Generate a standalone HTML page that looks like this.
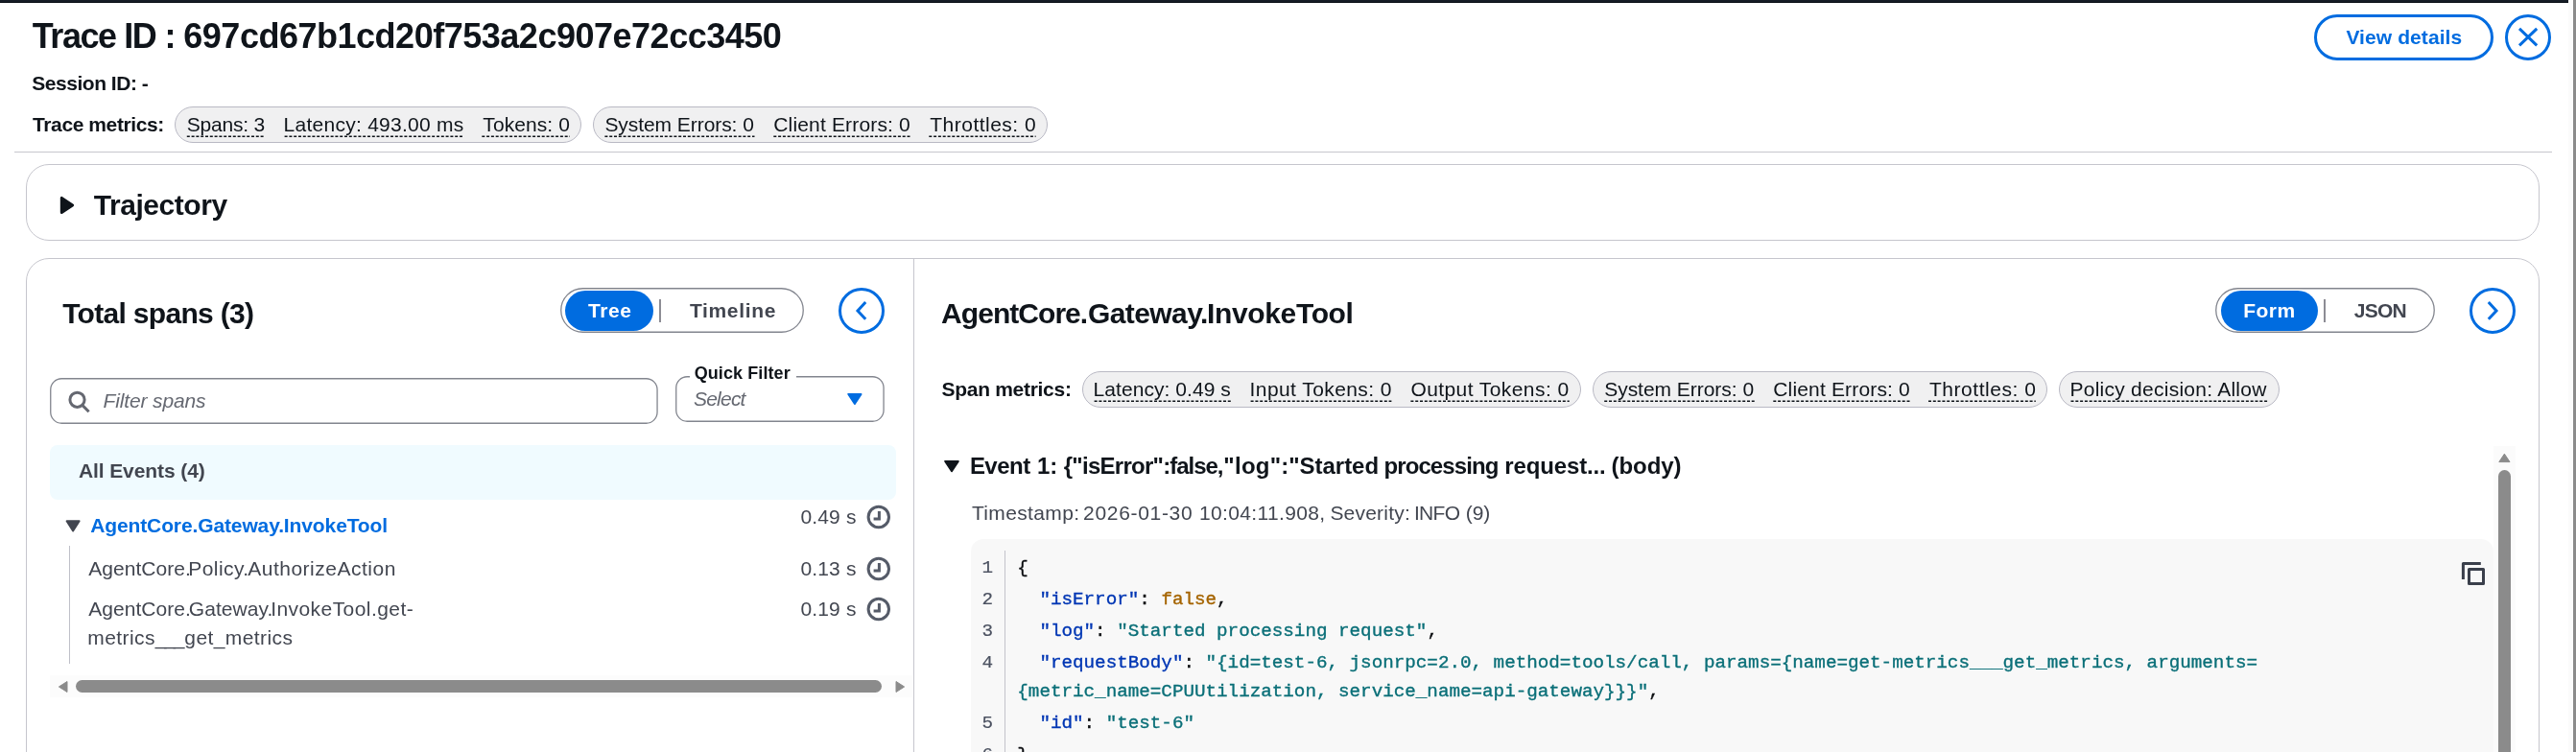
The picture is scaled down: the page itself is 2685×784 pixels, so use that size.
<!DOCTYPE html>
<html><head><meta charset="utf-8"><title>Trace</title>
<style>
*{box-sizing:border-box;margin:0;padding:0}
html,body{width:2685px;height:784px;overflow:hidden;background:#fff}
body{position:relative;font-family:"Liberation Sans",sans-serif;color:#0f141a}
.a{position:absolute}
.t{position:absolute;white-space:pre;font-family:"Liberation Sans",sans-serif}
.pill{position:absolute;height:38px;border:1px solid #b9b9c4;border-radius:19px;background:#f0f0f1}
.box{position:absolute;border:1px solid #c6c6cd;border-radius:24px;background:#fff}
.segon{position:absolute;height:42px;border-radius:21px;background:#006ce0}
.circ{position:absolute;width:48px;height:48px;border:3px solid #006ce0;border-radius:50%;background:#fff}
.ln{-webkit-text-stroke:0.2px;position:absolute;left:1012px;width:23px;text-align:right;font-family:"Liberation Mono",monospace;font-size:19.25px;line-height:30px;color:#4b5160;white-space:pre}
.cl{-webkit-text-stroke:0.35px;position:absolute;left:1060.3px;font-family:"Liberation Mono",monospace;font-size:19.25px;line-height:30px;white-space:pre}
#w{position:absolute;left:0;top:0;width:2685px;height:784px;overflow:hidden;will-change:transform}
</style></head><body><div id="w">
<!-- chrome -->
<div class="a" style="left:0;top:0;width:2677px;height:3px;background:#161d26"></div><div class="a" style="left:0;top:2px;width:2677px;height:1px;background:#060b12"></div>
<div class="a" style="left:2677px;top:0;width:8px;height:784px;background:#fbfbfb"></div>
<div class="a" style="left:2682px;top:0;width:3px;height:784px;background:#8b8b8b"></div>

<!-- header -->
<div class="a" style="left:15px;top:157.5px;width:2645px;height:1.5px;background:#c6c6cd"></div>
<div class="pill" style="left:182px;top:111px;width:424px"></div>
<div class="pill" style="left:618px;top:111px;width:474px"></div>
<div class="a" style="left:2412px;top:15px;width:187px;height:48px;border:3px solid #006ce0;border-radius:24px"></div>
<div class="circ" style="left:2611px;top:15px"></div>
<svg class="a" style="left:2611px;top:15px" width="48" height="48" viewBox="0 0 48 48"><path d="M15 14.9 L33.2 32.3 M33.2 14.9 L15 32.3" stroke="#006ce0" stroke-width="3" fill="none"/></svg>

<!-- trajectory -->
<div class="box" style="left:27px;top:171px;width:2620px;height:80px"></div>
<svg class="a" style="left:60px;top:200px" width="24" height="28" viewBox="0 0 24 28"><path d="M4.3 6.4 L4.3 21.4 L15.6 13.9 Z" fill="#0f141a" stroke="#0f141a" stroke-width="3" stroke-linejoin="round"/></svg>

<!-- main box -->
<div class="box" style="left:27px;top:269px;width:2620px;height:560px"></div>
<div class="a" style="left:952px;top:270px;width:1px;height:520px;background:#c6c6cd"></div>

<!-- left panel header -->
<svg class="a" style="left:580px;top:296px" width="262" height="56"><rect x="4.75" y="4.75" width="252.5" height="45.5" rx="22.75" fill="#fff" stroke="#82858e" stroke-width="1.3"/></svg>
<div class="segon" style="left:589px;top:303px;width:92px"></div>
<div class="a" style="left:687px;top:312px;width:2px;height:24px;background:#8c8c94"></div>
<div class="circ" style="left:874px;top:300px"></div>
<svg class="a" style="left:874px;top:300px" width="48" height="48" viewBox="0 0 48 48"><path d="M28.2 15.1 L20 23.9 L28.2 32.7" stroke="#006ce0" stroke-width="3" fill="none"/></svg>

<!-- filter input -->
<svg class="a" style="left:48px;top:390px" width="642" height="56"><rect x="4.75" y="4.75" width="632.3" height="46.5" rx="11.5" fill="#fff" stroke="#82858e" stroke-width="1.3"/></svg>
<svg class="a" style="left:68px;top:404px" width="30" height="30" viewBox="0 0 30 30"><circle cx="12.5" cy="12.8" r="7.6" stroke="#656871" stroke-width="3" fill="none"/><path d="M18 18.6 L24.6 25.2" stroke="#656871" stroke-width="3" fill="none"/></svg>
<!-- quick filter -->
<svg class="a" style="left:700px;top:388px" width="226" height="56"><rect x="4.75" y="4.75" width="216.3" height="46.5" rx="11.5" fill="#fff" stroke="#82858e" stroke-width="1.3"/></svg>
<div class="a" style="left:718.5px;top:378px;width:111.5px;height:24px;background:#fff"></div>
<svg class="a" style="left:880px;top:406px" width="22" height="20" viewBox="0 0 22 20"><path d="M4.3 4.9 L17.5 4.9 L10.9 15 Z" fill="#006ce0" stroke="#006ce0" stroke-width="2" stroke-linejoin="round"/></svg>

<!-- all events -->
<div class="a" style="left:52px;top:464px;width:882px;height:57px;border-radius:8px;background:#f0fbff"></div>
<svg class="a" style="left:66px;top:538px" width="20" height="20" viewBox="0 0 20 20"><path d="M3.6 5.3 L16.6 5.3 L10.1 15.4 Z" fill="#424650" stroke="#424650" stroke-width="2" stroke-linejoin="round"/></svg>
<div class="a" style="left:72px;top:569px;width:1px;height:123px;background:#bfc0c8"></div>
<!-- clocks -->
<svg class="a" style="left:902px;top:525px" width="28" height="28" viewBox="0 0 28 28"><circle cx="13.8" cy="14" r="10.7" stroke="#555b68" stroke-width="3" fill="none"/><path d="M14.4 8 L14.4 16 L8.6 16" stroke="#555b68" stroke-width="3" fill="none"/></svg>
<svg class="a" style="left:902px;top:579px" width="28" height="28" viewBox="0 0 28 28"><circle cx="13.8" cy="14" r="10.7" stroke="#555b68" stroke-width="3" fill="none"/><path d="M14.4 8 L14.4 16 L8.6 16" stroke="#555b68" stroke-width="3" fill="none"/></svg>
<svg class="a" style="left:902px;top:620.8px" width="28" height="28" viewBox="0 0 28 28"><circle cx="13.8" cy="14" r="10.7" stroke="#555b68" stroke-width="3" fill="none"/><path d="M14.4 8 L14.4 16 L8.6 16" stroke="#555b68" stroke-width="3" fill="none"/></svg>
<!-- h scrollbar -->
<div class="a" style="left:52px;top:704px;width:899px;height:23px;background:#fcfcfc"></div>
<div class="a" style="left:79px;top:709px;width:840px;height:13px;border-radius:6.5px;background:#8b8b8b"></div>
<svg class="a" style="left:58px;top:706px" width="16" height="20" viewBox="0 0 16 20"><path d="M12 4.5 L3.4 10 L12 15.5 Z" fill="#8b8b8b" stroke="#8b8b8b" stroke-width="1" stroke-linejoin="round"/></svg>
<svg class="a" style="left:930px;top:706px" width="16" height="20" viewBox="0 0 16 20"><path d="M4 4.5 L12.6 10 L4 15.5 Z" fill="#8b8b8b" stroke="#8b8b8b" stroke-width="1" stroke-linejoin="round"/></svg>

<!-- right panel header -->
<svg class="a" style="left:2305px;top:296px" width="237" height="56"><rect x="4.75" y="4.75" width="227.5" height="45.5" rx="22.75" fill="#fff" stroke="#82858e" stroke-width="1.3"/></svg>
<div class="segon" style="left:2315px;top:303px;width:101px"></div>
<div class="a" style="left:2422px;top:312px;width:2px;height:24px;background:#8c8c94"></div>
<div class="circ" style="left:2574px;top:300px"></div>
<svg class="a" style="left:2574px;top:300px" width="48" height="48" viewBox="0 0 48 48"><path d="M19.8 15.1 L28 23.9 L19.8 32.7" stroke="#006ce0" stroke-width="3" fill="none"/></svg>
<!-- span pills -->
<div class="pill" style="left:1128px;top:387px;width:520px"></div>
<div class="pill" style="left:1660px;top:387px;width:474px"></div>
<div class="pill" style="left:2146px;top:387px;width:230px"></div>
<!-- event -->
<svg class="a" style="left:982px;top:476px" width="20" height="20" viewBox="0 0 20 20"><path d="M3.2 4.9 L16.8 4.9 L10 15.1 Z" fill="#0f141a" stroke="#0f141a" stroke-width="2" stroke-linejoin="round"/></svg>
<!-- code block -->
<div class="a" style="left:1012px;top:562px;width:1587px;height:240px;border-radius:13px 13px 0 0;background:#f8f8f8"></div>
<div class="a" style="left:1047px;top:574px;width:1px;height:220px;background:#c3c3cb"></div>
<svg class="a" style="left:2562px;top:582px" width="32" height="32" viewBox="0 0 32 32"><path d="M5.4 21.9 L5.4 5.4 L23.8 5.4" stroke="#3a3f4b" stroke-width="3" stroke-linejoin="round" fill="none"/><rect x="11.5" y="11.5" width="15" height="14.9" stroke="#3a3f4b" stroke-width="3" stroke-linejoin="round" fill="none"/></svg>
<!-- v scrollbar -->
<div class="a" style="left:2599px;top:465px;width:23px;height:330px;background:#fbfbfb"></div>
<div class="a" style="left:2604px;top:490px;width:13px;height:320px;border-radius:6.5px;background:#8b8b8b"></div>
<svg class="a" style="left:2600px;top:468px" width="20" height="18" viewBox="0 0 20 18"><path d="M4.8 13.6 L10.4 5.2 L16 13.6 Z" fill="#8b8b8b" stroke="#8b8b8b" stroke-width="1" stroke-linejoin="round"/></svg>

<div class="t" style="left:33.8px;top:20px;font-size:36px;line-height:36px;letter-spacing:-1.443px;color:#0f141a;font-weight:700;">Trace ID</div>
<div class="t" style="left:171.5px;top:20px;font-size:36px;line-height:36px;letter-spacing:0.000px;color:#0f141a;font-weight:700;">:</div>
<div class="t" style="left:191.3px;top:20px;font-size:36px;line-height:36px;letter-spacing:-0.484px;color:#0f141a;font-weight:700;">697cd67b1cd20f753a2c907e72cc3450</div>
<div class="t" style="left:33.3px;top:76px;font-size:21px;line-height:21px;letter-spacing:-0.475px;color:#0f141a;font-weight:700;">Session ID: -</div>
<div class="t" style="left:34.1px;top:119px;font-size:21px;line-height:21px;letter-spacing:-0.408px;color:#0f141a;font-weight:700;">Trace metrics:</div>
<div class="t" style="left:194.8px;top:119px;font-size:21px;line-height:21px;letter-spacing:-0.200px;color:#0f141a;">Spans: 3</div>
<svg class="a" style="left:194px;top:140px" width="84" height="5"><line x1="0.8" y1="2.25" x2="82.4" y2="2.25" stroke="#0f141a" stroke-width="1.7" stroke-dasharray="3 1.8"/></svg>
<div class="t" style="left:295.6px;top:119px;font-size:21px;line-height:21px;letter-spacing:0.259px;color:#0f141a;">Latency: 493.00 ms</div>
<svg class="a" style="left:296px;top:140px" width="188" height="5"><line x1="0.6" y1="2.25" x2="187.0" y2="2.25" stroke="#0f141a" stroke-width="1.7" stroke-dasharray="3 1.8"/></svg>
<div class="t" style="left:503.3px;top:119px;font-size:21px;line-height:21px;letter-spacing:0.087px;color:#0f141a;">Tokens: 0</div>
<svg class="a" style="left:502px;top:140px" width="93" height="5"><line x1="0.3" y1="2.25" x2="92.0" y2="2.25" stroke="#0f141a" stroke-width="1.7" stroke-dasharray="3 1.8"/></svg>
<div class="t" style="left:630.4px;top:119px;font-size:21px;line-height:21px;letter-spacing:-0.060px;color:#0f141a;">System Errors: 0</div>
<svg class="a" style="left:630px;top:140px" width="158" height="5"><line x1="0.4" y1="2.25" x2="156.5" y2="2.25" stroke="#0f141a" stroke-width="1.7" stroke-dasharray="3 1.8"/></svg>
<div class="t" style="left:806.3px;top:119px;font-size:21px;line-height:21px;letter-spacing:0.160px;color:#0f141a;">Client Errors: 0</div>
<svg class="a" style="left:806px;top:140px" width="144" height="5"><line x1="0.3" y1="2.25" x2="142.7" y2="2.25" stroke="#0f141a" stroke-width="1.7" stroke-dasharray="3 1.8"/></svg>
<div class="t" style="left:969.3px;top:119px;font-size:21px;line-height:21px;letter-spacing:0.482px;color:#0f141a;">Throttles: 0</div>
<svg class="a" style="left:968px;top:140px" width="113" height="5"><line x1="0.3" y1="2.25" x2="111.6" y2="2.25" stroke="#0f141a" stroke-width="1.7" stroke-dasharray="3 1.8"/></svg>
<div class="t" style="left:2445.4px;top:28px;font-size:21px;line-height:21px;letter-spacing:0.091px;color:#006ce0;font-weight:700;">View details</div>
<div class="t" style="left:97.7px;top:199px;font-size:30px;line-height:30px;letter-spacing:-0.444px;color:#0f141a;font-weight:700;">Trajectory</div>
<div class="t" style="left:65.2px;top:312px;font-size:30px;line-height:30px;letter-spacing:-0.693px;color:#0f141a;font-weight:700;">Total spans (3)</div>
<div class="t" style="left:612.9px;top:313px;font-size:21px;line-height:21px;letter-spacing:0.633px;color:#ffffff;font-weight:700;">Tree</div>
<div class="t" style="left:718.9px;top:313px;font-size:21px;line-height:21px;letter-spacing:0.671px;color:#424650;font-weight:700;">Timeline</div>
<div class="t" style="left:107.5px;top:407px;font-size:21px;line-height:21px;letter-spacing:-0.136px;color:#656871;font-style:italic;">Filter spans</div>
<div class="t" style="left:723.7px;top:380px;font-size:18px;line-height:18px;letter-spacing:0.091px;color:#0f141a;font-weight:700;">Quick Filter</div>
<div class="t" style="left:722.9px;top:405px;font-size:21px;line-height:21px;letter-spacing:-0.760px;color:#656871;font-style:italic;">Select</div>
<div class="t" style="left:81.9px;top:480px;font-size:21px;line-height:21px;letter-spacing:-0.092px;color:#424650;font-weight:700;">All Events (4)</div>
<div class="t" style="left:94.2px;top:537px;font-size:21px;line-height:21px;letter-spacing:-0.119px;color:#006ce0;font-weight:700;">AgentCore.Gateway.InvokeTool</div>
<div class="t" style="left:92.2px;top:582px;font-size:21px;line-height:21px;letter-spacing:0.044px;color:#424650;">AgentCore.</div>
<div class="t" style="left:196.3px;top:582px;font-size:21px;line-height:21px;letter-spacing:0.433px;color:#424650;">Policy.</div>
<div class="t" style="left:258.2px;top:582px;font-size:21px;line-height:21px;letter-spacing:0.507px;color:#424650;">AuthorizeAction</div>
<div class="t" style="left:92.2px;top:624px;font-size:21px;line-height:21px;letter-spacing:0.044px;color:#424650;">AgentCore.</div>
<div class="t" style="left:196.8px;top:624px;font-size:21px;line-height:21px;letter-spacing:0.057px;color:#424650;">Gateway.</div>
<div class="t" style="left:282.2px;top:624px;font-size:21px;line-height:21px;letter-spacing:0.436px;color:#424650;">InvokeTool.get-</div>
<div class="t" style="left:91.2px;top:654px;font-size:21px;line-height:21px;letter-spacing:0.450px;color:#424650;">metrics</div>
<div class="t" style="left:161.7px;top:654px;font-size:21px;line-height:21px;letter-spacing:-2.100px;color:#424650;">___</div>
<div class="t" style="left:192.3px;top:654px;font-size:21px;line-height:21px;letter-spacing:0.410px;color:#424650;">get_metrics</div>
<div class="t" style="left:834.5px;top:528px;font-size:21px;line-height:21px;letter-spacing:0.140px;color:#424650;">0.49 s</div>
<div class="t" style="left:834.5px;top:582px;font-size:21px;line-height:21px;letter-spacing:0.140px;color:#424650;">0.13 s</div>
<div class="t" style="left:834.5px;top:624px;font-size:21px;line-height:21px;letter-spacing:0.140px;color:#424650;">0.19 s</div>
<div class="t" style="left:981.1px;top:312px;font-size:30px;line-height:30px;letter-spacing:-0.956px;color:#0f141a;font-weight:700;">AgentCore.</div>
<div class="t" style="left:1133.9px;top:312px;font-size:30px;line-height:30px;letter-spacing:-0.571px;color:#0f141a;font-weight:700;">Gateway.</div>
<div class="t" style="left:1258.1px;top:312px;font-size:30px;line-height:30px;letter-spacing:-0.367px;color:#0f141a;font-weight:700;">InvokeTool</div>
<div class="t" style="left:2338.3px;top:313px;font-size:21px;line-height:21px;letter-spacing:0.433px;color:#ffffff;font-weight:700;">Form</div>
<div class="t" style="left:2453.8px;top:313px;font-size:21px;line-height:21px;letter-spacing:-0.800px;color:#424650;font-weight:700;">JSON</div>
<div class="t" style="left:981.5px;top:395px;font-size:21px;line-height:21px;letter-spacing:-0.292px;color:#0f141a;font-weight:700;">Span metrics:</div>
<div class="t" style="left:1139.6px;top:395px;font-size:21px;line-height:21px;letter-spacing:0.057px;color:#0f141a;">Latency: 0.49 s</div>
<svg class="a" style="left:1140px;top:416px" width="145" height="5"><line x1="0.6" y1="2.25" x2="143.4" y2="2.25" stroke="#0f141a" stroke-width="1.7" stroke-dasharray="3 1.8"/></svg>
<div class="t" style="left:1302.6px;top:395px;font-size:21px;line-height:21px;letter-spacing:0.414px;color:#0f141a;">Input Tokens: 0</div>
<svg class="a" style="left:1303px;top:416px" width="149" height="5"><line x1="0.6" y1="2.25" x2="147.4" y2="2.25" stroke="#0f141a" stroke-width="1.7" stroke-dasharray="3 1.8"/></svg>
<div class="t" style="left:1470.4px;top:395px;font-size:21px;line-height:21px;letter-spacing:0.420px;color:#0f141a;">Output Tokens: 0</div>
<svg class="a" style="left:1470px;top:416px" width="167" height="5"><line x1="0.4" y1="2.25" x2="165.7" y2="2.25" stroke="#0f141a" stroke-width="1.7" stroke-dasharray="3 1.8"/></svg>
<div class="t" style="left:1672.2px;top:395px;font-size:21px;line-height:21px;letter-spacing:-0.033px;color:#0f141a;">System Errors: 0</div>
<svg class="a" style="left:1672px;top:416px" width="158" height="5"><line x1="0.2" y1="2.25" x2="156.7" y2="2.25" stroke="#0f141a" stroke-width="1.7" stroke-dasharray="3 1.8"/></svg>
<div class="t" style="left:1848.3px;top:395px;font-size:21px;line-height:21px;letter-spacing:0.160px;color:#0f141a;">Client Errors: 0</div>
<svg class="a" style="left:1848px;top:416px" width="144" height="5"><line x1="0.3" y1="2.25" x2="142.7" y2="2.25" stroke="#0f141a" stroke-width="1.7" stroke-dasharray="3 1.8"/></svg>
<div class="t" style="left:2011.0px;top:395px;font-size:21px;line-height:21px;letter-spacing:0.527px;color:#0f141a;">Throttles: 0</div>
<svg class="a" style="left:2010px;top:416px" width="113" height="5"><line x1="0.0" y1="2.25" x2="111.8" y2="2.25" stroke="#0f141a" stroke-width="1.7" stroke-dasharray="3 1.8"/></svg>
<div class="t" style="left:2157.5px;top:395px;font-size:21px;line-height:21px;letter-spacing:0.252px;color:#0f141a;">Policy decision: Allow</div>
<svg class="a" style="left:2158px;top:416px" width="207" height="5"><line x1="0.5" y1="2.25" x2="205.8" y2="2.25" stroke="#0f141a" stroke-width="1.7" stroke-dasharray="3 1.8"/></svg>
<div class="t" style="left:1010.9px;top:474px;font-size:24px;line-height:24px;letter-spacing:-0.525px;color:#0f141a;font-weight:700;">Event</div>
<div class="t" style="left:1081.1px;top:474px;font-size:24px;line-height:24px;letter-spacing:-0.300px;color:#0f141a;font-weight:700;">1:</div>
<div class="t" style="left:1108.7px;top:474px;font-size:24px;line-height:24px;letter-spacing:-0.722px;color:#0f141a;font-weight:700;">{"isError"</div>
<div class="t" style="left:1212.3px;top:474px;font-size:24px;line-height:24px;letter-spacing:-1.033px;color:#0f141a;font-weight:700;">:false,</div>
<div class="t" style="left:1275.2px;top:474px;font-size:24px;line-height:24px;letter-spacing:0.325px;color:#0f141a;font-weight:700;">"log"</div>
<div class="t" style="left:1335.3px;top:474px;font-size:24px;line-height:24px;letter-spacing:-0.037px;color:#0f141a;font-weight:700;">:"Started</div>
<div class="t" style="left:1442.5px;top:474px;font-size:24px;line-height:24px;letter-spacing:-0.911px;color:#0f141a;font-weight:700;">processing</div>
<div class="t" style="left:1568.3px;top:474px;font-size:24px;line-height:24px;letter-spacing:-0.144px;color:#0f141a;font-weight:700;">request...</div>
<div class="t" style="left:1679.6px;top:474px;font-size:24px;line-height:24px;letter-spacing:-0.080px;color:#0f141a;font-weight:700;">(body)</div>
<div class="t" style="left:1012.9px;top:524px;font-size:21px;line-height:21px;letter-spacing:0.356px;color:#424650;">Timestamp:</div>
<div class="t" style="left:1129.1px;top:524px;font-size:21px;line-height:21px;letter-spacing:0.678px;color:#424650;">2026-01-30</div>
<div class="t" style="left:1249.9px;top:524px;font-size:21px;line-height:21px;letter-spacing:0.358px;color:#424650;">10:04:11.908,</div>
<div class="t" style="left:1386.4px;top:524px;font-size:21px;line-height:21px;letter-spacing:0.212px;color:#424650;">Severity:</div>
<div class="t" style="left:1473.9px;top:524px;font-size:21px;line-height:21px;letter-spacing:-0.667px;color:#424650;">INFO</div>
<div class="t" style="left:1527.7px;top:524px;font-size:21px;line-height:21px;letter-spacing:0.000px;color:#424650;">(9)</div>
<div class="ln" style="top:577.0px">1</div>
<div class="cl" style="top:577.0px;letter-spacing:-0.010px"><span style="color:#0b0d10">{</span></div>
<div class="ln" style="top:610.0px">2</div>
<div class="cl" style="top:610.0px;letter-spacing:-0.010px"><span style="color:#0b0d10">  </span><span style="color:#0036b4">"isError"</span><span style="color:#0b0d10">: </span><span style="color:#a56400">false</span><span style="color:#0b0d10">,</span></div>
<div class="ln" style="top:643.0px">3</div>
<div class="cl" style="top:643.0px;letter-spacing:-0.010px"><span style="color:#0b0d10">  </span><span style="color:#0036b4">"log"</span><span style="color:#0b0d10">: </span><span style="color:#0a6f78">"Started processing request"</span><span style="color:#0b0d10">,</span></div>
<div class="ln" style="top:676.0px">4</div>
<div class="cl" style="top:676.0px;letter-spacing:-0.010px"><span style="color:#0b0d10">  </span><span style="color:#0036b4">"requestBody"</span><span style="color:#0b0d10">: </span><span style="color:#0a6f78">"{id=test-6, jsonrpc=2.0, method=tools/call, params={name=get-metrics___get_metrics, arguments=</span></div>
<div class="cl" style="top:706.0px;letter-spacing:-0.010px"><span style="color:#0a6f78">{metric_name=CPUUtilization, service_name=api-gateway}}}"</span><span style="color:#0b0d10">,</span></div>
<div class="ln" style="top:739.0px">5</div>
<div class="cl" style="top:739.0px;letter-spacing:-0.010px"><span style="color:#0b0d10">  </span><span style="color:#0036b4">"id"</span><span style="color:#0b0d10">: </span><span style="color:#0a6f78">"test-6"</span></div>
<div class="ln" style="top:772.0px">6</div>
<div class="cl" style="top:772.0px;letter-spacing:-0.010px"><span style="color:#0b0d10">}</span></div>
</div></body></html>
